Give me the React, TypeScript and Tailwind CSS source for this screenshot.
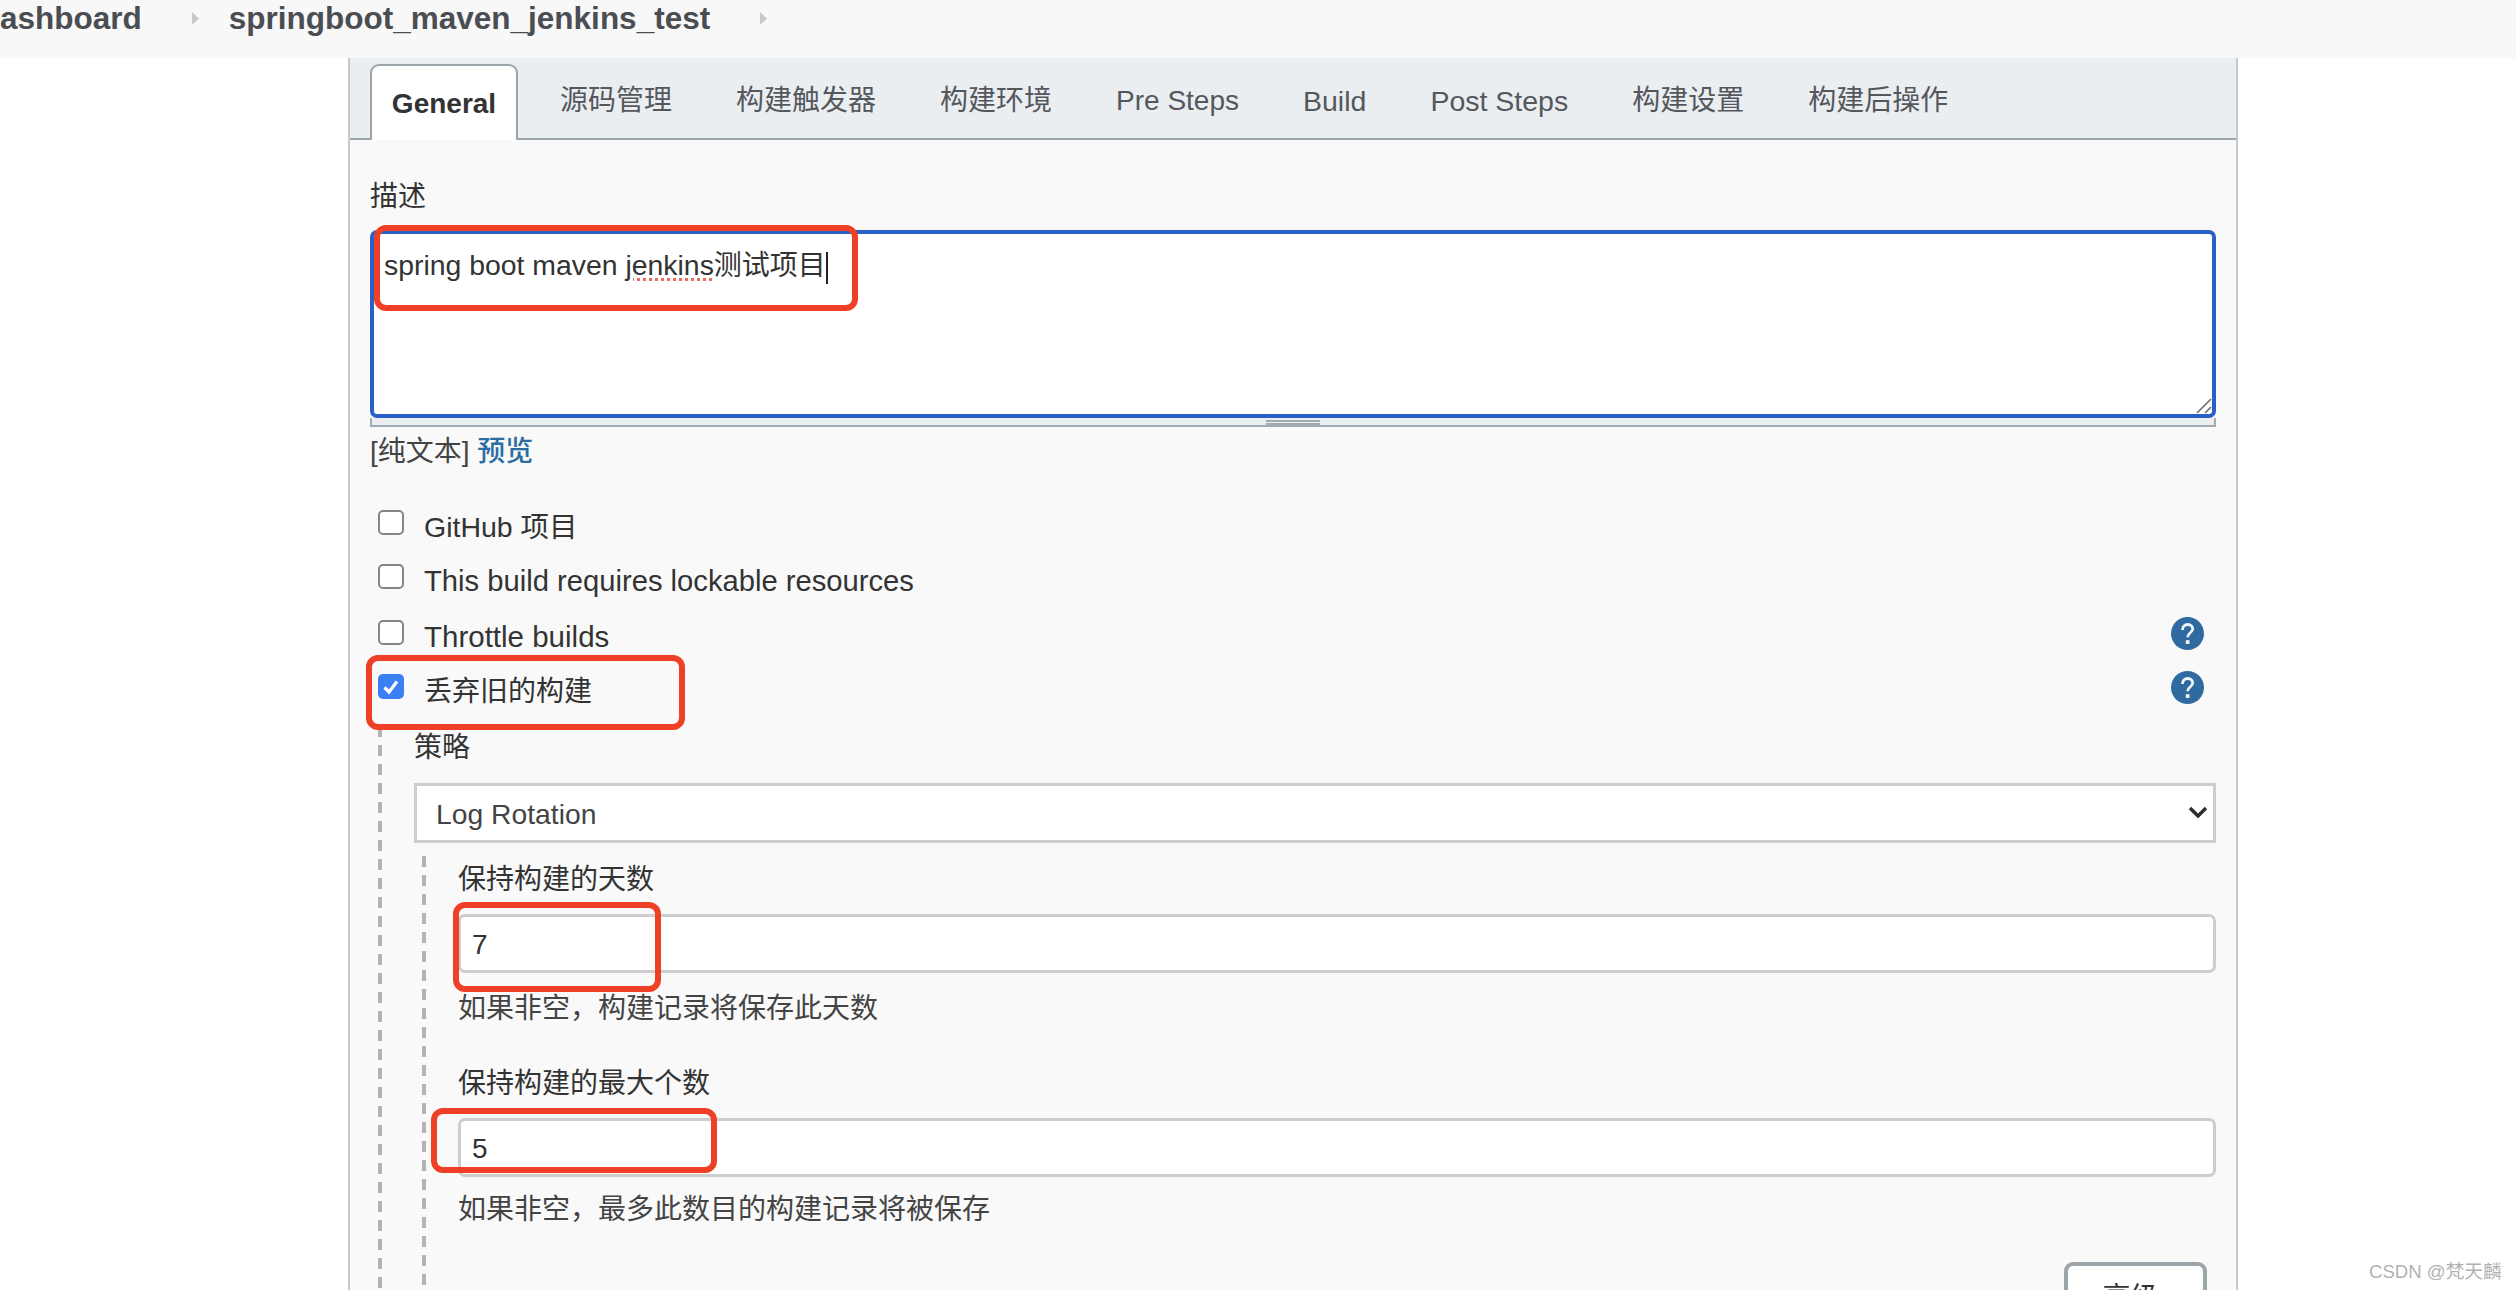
const tabs = [
  { label: "源码管理", cls: "text-[28px]" },
  { label: "构建触发器", cls: "text-[28px]" },
  { label: "构建环境", cls: "text-[28px]" },
  { label: "Pre Steps", cls: "text-[28px]" },
  { label: "Build", cls: "text-[28.5px]" },
  { label: "Post Steps", cls: "text-[28.5px]" },
  { label: "构建设置", cls: "text-[28px]" },
  { label: "构建后操作", cls: "text-[28px]" },
];

const dashes =
  "w-[4px] shrink-0 bg-[repeating-linear-gradient(to_bottom,#b3b3b3_0,#b3b3b3_11px,transparent_11px,transparent_19px)]";

function HelpIcon({ className }: { className: string }) {
  return (
    <svg width="33" height="33" viewBox="0 0 33 33" className={`shrink-0 ${className}`}>
      <circle cx="16.5" cy="16.5" r="16.5" fill="#2f6ba1" />
      <path d="M11.5 13c0-3.300 2.200-5.500 5.200-5.500s5 2 5 4.600c0 3.700-5.100 3.700-5.100 8.100" fill="none" stroke="#f2f5f8" strokeWidth="2.800" />
      <rect x="14.800" y="23.200" width="3.700" height="3.700" fill="#f2f5f8" />
    </svg>
  );
}

function Crumb({ text, className }: { text: string; className?: string }) {
  return (
    <div className={`flex items-center ${className ?? ""}`}>
      <span className="text-[31.5px] leading-[37px] font-bold text-[#4a4e52]">{text}</span>
      <svg width="7" height="13" viewBox="0 0 7 13" className="ml-[50px]">
        <path d="M0 0l7 6.500-7 6.500z" fill="#c9cacb" />
      </svg>
    </div>
  );
}

function CheckRow({ label, labelCls, boxCls, checked, help, className }: { label: string; labelCls: string; boxCls: string; checked?: boolean; help?: string; className: string }) {
  return (
    <div className={`flex items-start h-10 pl-2 ${className}`}>
      <span
        className={
          checked
            ? `w-[26px] h-[25px] rounded-[5px] bg-[#3b7ff5] flex items-center justify-center ${boxCls}`
            : `w-[26px] h-[25px] rounded-[5px] bg-white border-2 border-[#858585] ${boxCls}`
        }
      >
        {checked && (
          <svg width="18" height="16" viewBox="0 0 18 16">
            <path d="M2.500 8.500l4.500 4.500 8-10.500" fill="none" stroke="#fff" strokeWidth="3.200" />
          </svg>
        )}
      </span>
      <span className={`ml-5 text-[#333] ${labelCls}`}>{label}</span>
      {help && <HelpIcon className={`ml-auto mr-3 ${help}`} />}
    </div>
  );
}

function NumberField({ value, help, helpCls }: { value: string; help: string; helpCls: string }) {
  return (
    <div>
      <input
        defaultValue={value}
        className="block w-full h-[59px] px-[11px] pt-[2px] bg-white border-[3px] border-[#cdcdcd] rounded-[7px] text-[28px] text-[#333] outline-none"
      />
      <p className={`h-10 text-[28px] leading-[43px] text-[#444] ${helpCls}`}>{help}</p>
    </div>
  );
}

export default function App() {
  return (
    <div className="relative h-[1290px] overflow-hidden bg-white font-['Liberation_Sans','Noto_Sans_CJK_SC',sans-serif]">
      <div className="h-[58px] bg-[#f8f8f8] flex items-start">
        <Crumb text="ashboard" />
        <Crumb text="springboot_maven_jenkins_test" className="ml-[30px]" />
      </div>

      <div className="ml-[348px] w-[1890px] h-[1232px] bg-[#f9f9f9] border-x-2 border-[#c8c8c8]">
        <div className="h-[82px] pt-[6px] pl-[20px] flex bg-[#ebeef1] border-b-2 border-[#9ba4a9]">
          <div className="w-[148px] h-[76px] mr-[10px] bg-white border-x-2 border-t-2 border-[#9ba4a9] rounded-t-[9px] flex items-center justify-center pt-[2px] text-[28px] font-bold text-[#333]">
            General
          </div>
          {tabs.map((t) => (
            <div key={t.label} className={`px-8 h-[74px] flex items-center text-[#54585d] whitespace-nowrap ${t.cls}`}>
              {t.label}
            </div>
          ))}
        </div>

        <div className="px-5">
          <div className="mt-[35px] mb-[15px] h-10 text-[28px] leading-[43px] text-[#333]">描述</div>

          <div className="relative h-[188px] bg-white border-4 border-[#2a5fc8] rounded-[7px] pl-[10px] pt-[11px] text-[28px] leading-10 text-[#333]">
            <span className="text-[28.4px]">
              spring boot maven{" "}
              <span className="underline decoration-dotted decoration-[3px] decoration-[#ec6a62] underline-offset-[3px]">jenkins</span>
            </span>
            测试项目
            <span className="inline-block w-[2px] h-[32px] align-middle bg-[#222]" />
            <svg width="16" height="16" viewBox="0 0 16 16" className="absolute right-0 bottom-0">
              <path d="M1 15L15 1M9 15l6-6" fill="none" stroke="#666" strokeWidth="1.500" />
            </svg>
          </div>
          <div className="h-[9px] bg-[#ebeef1] border-x-2 border-b-2 border-[#a3abb0] flex justify-center pt-[2px]">
            <div className="w-[54px] h-[5px] border-y-2 border-[#a3abb0]" />
          </div>

          <div className="mt-[3px] h-10 text-[28px] leading-[43px] text-[#444]">
            [纯文本] <span className="text-[#2b6ca3] font-medium">预览</span>
          </div>

          <CheckRow label="GitHub 项目" labelCls="text-[28.5px] leading-[43px]" boxCls="mt-1" className="mt-9" />
          <CheckRow label="This build requires lockable resources" labelCls="text-[29.2px] leading-10" boxCls="mt-[3px]" className="mt-[15px]" />
          <CheckRow label="Throttle builds" labelCls="text-[29.5px] leading-10" boxCls="mt-[3px]" help="mt-0" className="mt-4" />
          <CheckRow label="丢弃旧的构建" labelCls="text-[28px] leading-[43px]" boxCls="mt-1" checked help="mt-[1px]" className="mt-[13px]" />

          <div className="flex ml-2 mt-[16px] h-[700px]">
            <div className={dashes} />
            <div className="flex-1 pl-8">
              <div className="h-10 text-[28px] leading-[43px] text-[#333]">策略</div>
              <div className="relative mt-[17px]">
                <select className="block w-full h-[60px] pl-[19px] pt-[2px] appearance-none bg-white border-[3px] border-[#cdcdcd] text-[28.3px] text-[#444] outline-none">
                  <option>Log Rotation</option>
                </select>
                <svg width="20" height="12" viewBox="0 0 20 12" className="absolute right-2 top-[23px]">
                  <path d="M2 2l8 8 8-8" fill="none" stroke="#2e2e2e" strokeWidth="3.500" />
                </svg>
              </div>

              <div className="flex ml-2 mt-[13px] h-[500px]">
                <div className={dashes} />
                <div className="flex-1 pl-8 pt-[2px]">
                  <div className="mb-4 h-10 text-[28px] leading-[43px] text-[#333]">保持构建的天数</div>
                  <NumberField value="7" help="如果非空，构建记录将保存此天数" helpCls="mt-[14px]" />
                  <div className="mt-[35px] mb-4 h-10 text-[28px] leading-[43px] text-[#333]">保持构建的最大个数</div>
                  <NumberField value="5" help="如果非空，最多此数目的构建记录将被保存" helpCls="mt-[11px]" />
                  <div className="flex justify-end mt-[34px] mr-[9px]">
                    <button className="w-[143px] h-[72px] pr-[10px] bg-white border-4 border-[#9ba4a9] rounded-[9px] text-[28px] text-[#333]">
                      高级
                    </button>
                  </div>
                </div>
              </div>
            </div>
          </div>
        </div>
      </div>

      {/* red annotation boxes drawn on top of the screenshot */}
      <div className="absolute left-[374px] top-[225px] w-[484px] h-[86px] border-[6px] border-[#ee4026] rounded-[12px]" />
      <div className="absolute left-[366px] top-[655px] w-[319px] h-[75px] border-[6px] border-[#ee4026] rounded-[12px]" />
      <div className="absolute left-[453px] top-[902px] w-[208px] h-[90px] border-[6px] border-[#ee4026] rounded-[12px]" />
      <div className="absolute left-[431px] top-[1108px] w-[286px] h-[65px] border-[6px] border-[#ee4026] rounded-[12px]" />

      <div className="absolute left-[2369px] top-[1259px] text-[18.6px] leading-[26px] text-[#b2b2b2] whitespace-nowrap">
        CSDN @梵天麟
      </div>
    </div>
  );
}
